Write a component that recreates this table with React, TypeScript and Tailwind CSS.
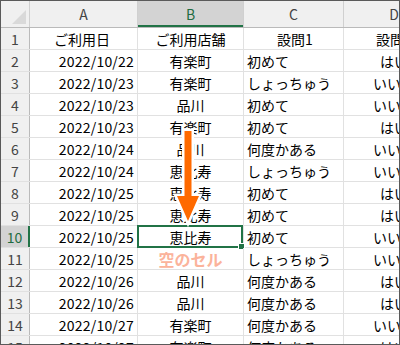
import React from "react";

type Row = [string, string, string, string];

const rows: Row[] = [
  ["ご利用日", "ご利用店舗", "設問1", "設問2"],
  ["2022/10/22", "有楽町", "初めて", "はい"],
  ["2022/10/23", "有楽町", "しょっちゅう", "いいえ"],
  ["2022/10/23", "品川", "初めて", "いいえ"],
  ["2022/10/23", "有楽町", "初めて", "はい"],
  ["2022/10/24", "品川", "何度かある", "いいえ"],
  ["2022/10/24", "恵比寿", "しょっちゅう", "いいえ"],
  ["2022/10/25", "恵比寿", "初めて", "はい"],
  ["2022/10/25", "恵比寿", "初めて", "はい"],
  ["2022/10/25", "恵比寿", "初めて", "いいえ"],
  ["2022/10/25", "", "しょっちゅう", "いいえ"],
  ["2022/10/26", "品川", "何度かある", "はい"],
  ["2022/10/26", "品川", "何度かある", "はい"],
  ["2022/10/27", "有楽町", "何度かある", "いいえ"],
  ["2022/10/27", "有楽町", "何度かある", "はい"],
];

const font = { fontFamily: '"Noto Sans CJK JP", "Noto Sans", sans-serif' };

export default function App() {
  const selectedRow = 10;
  return (
    <div className="relative w-[400px] h-[345px] bg-white" style={font}>
      <div className="w-full h-full border border-[#5a5a5a] overflow-hidden">
        {/* column headers */}
        <div className="flex h-[27px] bg-[#f0f0f0] border-b border-[#bababa] text-[14px] text-[#444]">
          <div className="relative w-[29px] shrink-0 border-r border-[#d0d0d0]">
            <svg className="absolute right-[3px] bottom-[3px]" width="14" height="14" viewBox="0 0 14 14">
              <polygon points="14,0 14,14 0,14" fill="#d9d9d9" />
            </svg>
          </div>
          <div className="w-[108px] shrink-0 border-r border-[#d0d0d0] flex items-center justify-center">A</div>
          <div className="w-[106px] shrink-0 border-r border-[#d0d0d0] bg-[#d3d3d3] text-[#1e6b40] flex items-center justify-center shadow-[inset_0_-2px_0_#217346]">B</div>
          <div className="w-[100px] shrink-0 border-r border-[#d0d0d0] flex items-center justify-center">C</div>
          <div className="w-[100px] shrink-0 flex items-center justify-center">D</div>
        </div>
        {rows.map((r, i) => {
          const n = i + 1;
          const sel = n === selectedRow;
          return (
            <div key={n} className="flex h-[22px] border-b border-[#e1e1e1] text-[14px] text-black leading-none">
              <div
                className={
                  "w-[29px] shrink-0 flex items-center justify-center " +
                  (sel
                    ? "bg-[#d3d3d3] text-[#1e6b40] border-r-2 border-[#217346]"
                    : "bg-[#f0f0f0] text-[#444] border-r border-[#bababa]")
                }
              >
                {n}
              </div>
              <div
                className={
                  "w-[108px] shrink-0 border-r border-[#e1e1e1] flex items-center pr-[3px] " +
                  (n === 1 ? "justify-center" : "justify-end tracking-[0.2px]")
                }
              >
                {r[0]}
              </div>
              <div className="relative w-[106px] shrink-0 border-r border-[#e1e1e1] flex items-center justify-center">
                {n === 11 ? (
                  <span className="font-bold text-[16px] text-[#fbb39b]">空のセル</span>
                ) : (
                  r[1]
                )}
                {sel && (
                  <div className="absolute -left-[1px] -top-[1px] right-0 bottom-[-1px] border-2 border-[#217346]">
                    <div className="absolute -right-[4px] -bottom-[4px] w-[7px] h-[7px] bg-[#217346] border border-white" />
                  </div>
                )}
              </div>
              <div
                className={
                  "w-[100px] shrink-0 border-r border-[#e1e1e1] flex items-center pl-[3px] " +
                  (n === 1 ? "justify-center" : "justify-start")
                }
              >
                {r[2]}
              </div>
              <div className="w-[100px] shrink-0 flex items-center justify-center whitespace-nowrap overflow-hidden">
                {r[3]}
              </div>
            </div>
          );
        })}
      </div>
      {/* down arrow across column B */}
      <svg className="absolute left-0 top-0 pointer-events-none" width="400" height="345" viewBox="0 0 400 345">
        <path
          d="M184.5 131 H191.5 V196 H199 L188 221 L177 196 H184.5 Z"
          fill="#ff6a00"
          stroke="#ffffff"
          strokeWidth="5"
          strokeLinejoin="miter"
          paintOrder="stroke"
        />
      </svg>
    </div>
  );
}
